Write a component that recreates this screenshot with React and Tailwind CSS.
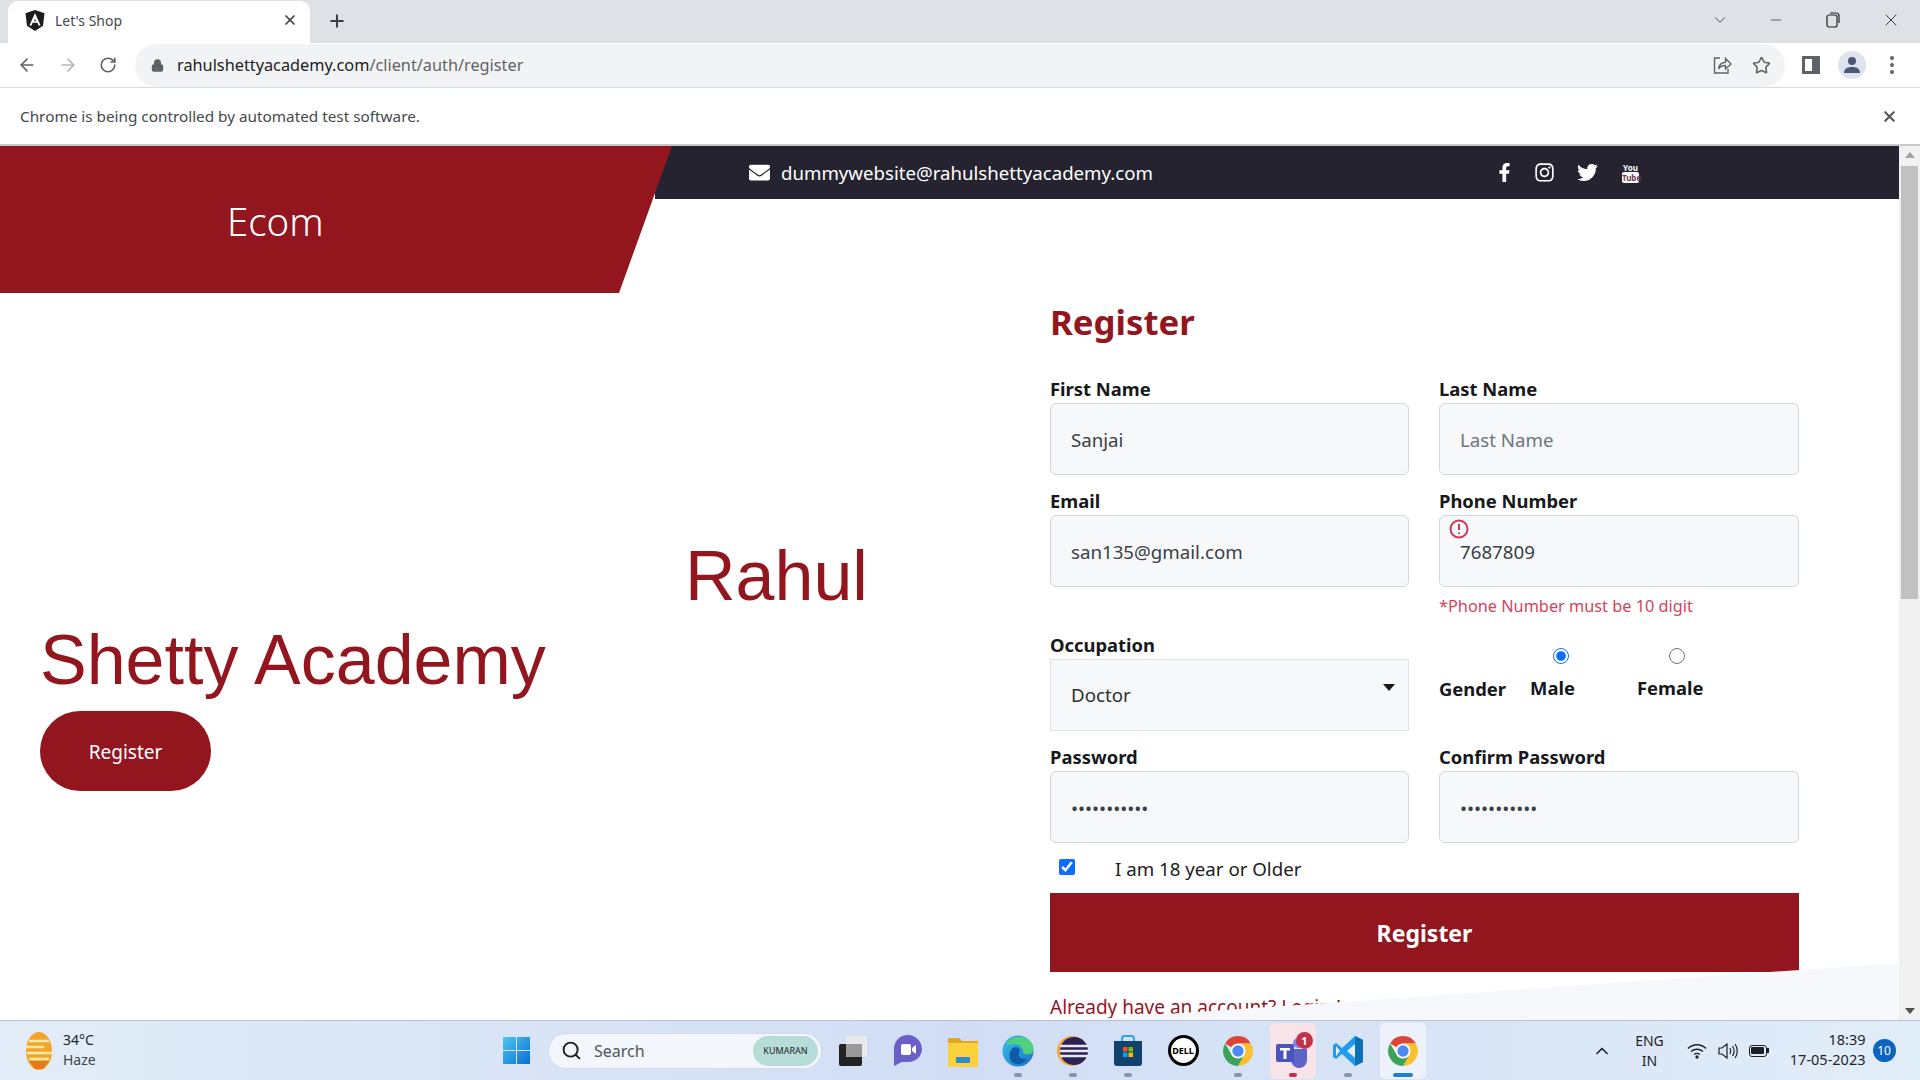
import { ArrowLeft, ArrowRight, RotateCw, Lock, Star, X, Plus, ChevronDown, ChevronUp, Minus, Search } from "lucide-react";
import { FaFacebookF, FaInstagram, FaTwitter, FaEnvelope } from "react-icons/fa";

const inputClass =
  "w-full h-[72px] px-[20px] bg-[#f7f8fa] border border-[#d3d6da] rounded-[6px] text-[18.7px] text-[#3a3f45] outline-none placeholder:text-[#6c757d]";

function Field({ label, children }) {
  return (
    <div>
      <div className="h-[26px] leading-[24px] text-[18.4px] font-bold text-[#16181b]">{label}</div>
      {children}
    </div>
  );
}

function ChromeLogo({ size = 38 }) {
  return (
    <svg width={size} height={size} viewBox="0 0 24 24">
      <path d="M12 1.5a10.5 10.5 0 0 1 9.1 5.25H12a5.25 5.25 0 0 0-4.55 2.63L2.9 6.75A10.5 10.5 0 0 1 12 1.5z" fill="#db4437" />
      <path d="M21.1 6.75A10.5 10.5 0 0 1 12 22.5l4.55-7.88A5.25 5.25 0 0 0 12 6.75z" fill="#fbc02d" />
      <path d="M2.9 6.75A10.5 10.5 0 0 0 12 22.5l4.55-7.88a5.25 5.25 0 0 1-9.1 0z" fill="#3da35a" />
      <circle cx="12" cy="12" r="5.2" fill="#fff" />
      <circle cx="12" cy="12" r="4" fill="#4a8af4" />
    </svg>
  );
}

function TaskIcon({ children, dot, className = "" }) {
  return (
    <div className={`relative w-[46px] h-[56px] mx-[4.5px] flex items-center justify-center rounded-[5px] ${className}`}>
      {children}
      {dot && <span className={`absolute bottom-[2px] left-1/2 -translate-x-1/2 h-[4px] rounded-full ${dot}`} />}
    </div>
  );
}

export default function App() {
  return (
    <div className="w-[1920px] h-[1080px] flex flex-col overflow-hidden bg-white font-['Noto_Sans','Open_Sans',sans-serif]">
      {/* tab strip */}
      <div className="h-[43px] shrink-0 bg-[#dee1e6] flex items-end pl-[8px]">
        <div className="w-[302px] h-[42px] pb-[4px] bg-white rounded-t-[10px] flex items-center pl-[17px] pr-[12px]">
          <svg width="20" height="21" viewBox="0 0 20 21">
            <path d="M10 0L19.5 3.3 18 15.8 10 21 2 15.8.5 3.3z" fill="#1c1c20" />
            <path d="M10 3L4.4 15.6h2.1l1.1-2.8h4.8l1.1 2.8h2.1zM9 11.2l1-2.5 1 2.5z" fill="#fff" />
          </svg>
          <span className="ml-[10px] text-[14px] text-[#45484d]">Let's Shop</span>
          <X size={16} strokeWidth={2.6} className="ml-auto text-[#3c4043]" />
        </div>
        <Plus size={20} strokeWidth={2.4} className="ml-[17px] mb-[12px] text-[#3c4043]" />
        <div className="ml-auto h-full pb-[4px] flex items-center text-[#3c4043]">
          <ChevronDown size={18} strokeWidth={1.2} className="mr-[39px]" />
          <Minus size={16} strokeWidth={1.2} className="mr-[42px]" />
          <svg width="14" height="16" viewBox="0 0 14 16" fill="none" stroke="#222" strokeWidth="1.2" className="mr-[41px]">
            <rect x="1" y="3" width="10" height="12" rx="2" />
            <path d="M4 1h6a3 3 0 0 1 3 3v7" />
          </svg>
          <X size={20} strokeWidth={1.2} className="mr-[19px]" />
        </div>
      </div>

      {/* toolbar */}
      <div className="h-[45px] shrink-0 bg-white border-b border-[#d9dadc] flex items-center">
        <ArrowLeft size={20} strokeWidth={2} className="ml-[17px] text-[#5f6368]" />
        <ArrowRight size={20} strokeWidth={2} className="ml-[21px] text-[#b4b6b9]" />
        <RotateCw size={18} strokeWidth={2.2} className="ml-[21px] text-[#5f6368]" />
        <div className="ml-[18px] w-[1650px] h-[43px] rounded-full bg-[#f1f3f4] flex items-center pl-[16px] pr-[11px]">
          <Lock size={13} strokeWidth={3} fill="#5f6368" className="text-[#5f6368]" />
          <span className="ml-[13px] text-[16.3px] text-[#202124]">
            rahulshettyacademy.com<span className="text-[#5f6368]">/client/auth/register</span>
          </span>
          <svg width="20" height="20" viewBox="0 0 20 20" fill="none" stroke="#5f6368" strokeWidth="1.4" className="ml-auto mr-[20px]">
            <path d="M8 3H2.5v15H16v-4" />
            <path d="M6.5 14c.5-4 3-6.5 7-6.8V3.5L19 9l-5.500 5v-3.500c-3 0-5.500 1-7 3.500z" />
          </svg>
          <Star size={19} strokeWidth={2} className="mr-[3px] text-[#5f6368]" />
        </div>
        <div className="ml-[17px] w-[18px] h-[18px] border-[3px] border-[#5f6368] border-r-[8px]" />
        <div className="ml-[18px] w-[28px] h-[28px] rounded-full bg-[#dfe3ee] flex items-center justify-center">
          <svg width="18" height="18" viewBox="0 0 18 18" fill="#4a5876">
            <circle cx="9" cy="5" r="4" />
            <path d="M1 17c0-4 3-6 8-6s8 2 8 6z" />
          </svg>
        </div>
        <div className="ml-[24px] flex flex-col gap-[3px]">
          <span className="w-[4px] h-[4px] rounded-full bg-[#5f6368]" />
          <span className="w-[4px] h-[4px] rounded-full bg-[#5f6368]" />
          <span className="w-[4px] h-[4px] rounded-full bg-[#5f6368]" />
        </div>
      </div>

      {/* automation infobar */}
      <div className="h-[58px] shrink-0 bg-white border-b-2 border-[#c9cacc] flex items-center justify-between pl-[20px] pr-[22px]">
        <span className="text-[15.3px] text-[#45484c]">Chrome is being controlled by automated test software.</span>
        <X size={17} strokeWidth={3} className="text-[#55585c]" />
      </div>

      {/* page with scrollbar */}
      <div className="h-[874px] shrink-0 flex overflow-hidden">
        <div className="relative w-[1899px] h-full overflow-hidden">
          <div className="flex items-start">
            <div className="relative z-10 w-[672px] h-[147px] bg-[#93161f] [clip-path:polygon(0_0,100%_0,619px_100%,0_100%)] pl-[227px] pt-[45px] text-[38.5px] leading-[60px] font-light text-white">
              Ecom
            </div>
            <div className="w-[1244px] -ml-[17px] h-[53px] bg-[#24232f] flex items-center text-white">
              <FaEnvelope size={21} className="ml-[94px]" />
              <span className="ml-[11px] text-[18.65px]">dummywebsite@rahulshettyacademy.com</span>
              <FaFacebookF size={19} className="ml-[342px]" />
              <FaInstagram size={21} className="ml-[20px]" />
              <FaTwitter size={21} className="ml-[22px]" />
              <div className="ml-[24px] w-[17px] flex flex-col items-center leading-none text-white font-bold">
                <span className="text-[8px] leading-[9px]">You</span>
                <span className="w-full h-[11px] rounded-[2px] bg-white text-[8px] leading-[11px] text-center text-[#6b3a55]">Tube</span>
              </div>
            </div>
          </div>

          <div className="flex">
            <div className="w-[1050px] shrink-0 pl-[40px] pt-[241px] text-[#93161f] font-['Liberation_Sans',sans-serif] text-[70px]">
              <div className="ml-[645px] h-[84px] leading-[84px]">Rahul</div>
              <div className="h-[72px] leading-[84px]">Shetty Academy</div>
              <button className="block mt-[21px] pt-[3px] w-[171px] h-[80px] rounded-full bg-[#93161f] text-white text-[19px] font-['Noto_Sans',sans-serif]">
                Register
              </button>
            </div>

            <div className="w-[749px] shrink-0">
              <h1 className="mt-[3px] h-[52px] leading-[52px] text-[34.8px] font-bold text-[#93161f]">Register</h1>
              <div className="mt-[29px] grid grid-cols-[359px_360px] gap-x-[30px] gap-y-[14px]">
                <Field label="First Name">
                  <input className={inputClass} defaultValue="Sanjai" />
                </Field>
                <Field label="Last Name">
                  <input className={inputClass} placeholder="Last Name" />
                </Field>
                <Field label="Email">
                  <input className={inputClass} defaultValue="san135@gmail.com" />
                </Field>
                <Field label="Phone Number">
                  <div className="relative">
                    <input className={inputClass} defaultValue="7687809" />
                    <svg width="20" height="20" viewBox="0 0 20 20" fill="none" className="absolute left-[10px] top-[4px]">
                      <circle cx="10" cy="10" r="8.500" stroke="#cc3a55" strokeWidth="2" />
                      <path d="M10 5v6M10 13.500v1.500" stroke="#cc3a55" strokeWidth="2" />
                    </svg>
                  </div>
                  <div className="mt-[6px] h-[26px] leading-[26px] text-[16.3px] text-[#d2445c]">*Phone Number must be 10 digit</div>
                </Field>
                <Field label="Occupation">
                  <div className="w-full h-[72px] pl-[20px] pr-[13px] bg-[#f7f8fa] border border-[#dfe1e4] flex items-center justify-between text-[18.7px] text-[#2b2f33]">
                    <span>Doctor</span>
                    <span className="mb-[16px] w-0 h-0 border-x-[6px] border-x-transparent border-t-[7px] border-t-[#1a1a1a]" />
                  </div>
                </Field>
                <div className="flex items-start text-[18.4px] font-bold text-[#16181b] pt-[15px]">
                  <span className="mt-[27px]">Gender</span>
                  <div className="ml-[24px] flex flex-col items-center">
                    <input type="radio" name="gender" defaultChecked className="ml-[18px] w-[16px] h-[16px] accent-[#0d6efd]" />
                    <span className="mt-[10px]">Male</span>
                  </div>
                  <div className="ml-[62px] flex flex-col items-center">
                    <input type="radio" name="gender" className="ml-[14px] w-[16px] h-[16px]" />
                    <span className="mt-[10px]">Female</span>
                  </div>
                </div>
                <Field label="Password">
                  <input type="password" className={inputClass} defaultValue="abcdefghijk" />
                </Field>
                <Field label="Confirm Password">
                  <input type="password" className={inputClass} defaultValue="abcdefghijk" />
                </Field>
              </div>
              <div className="h-[50px] pt-[2px] flex items-center pl-[9px] text-[18.7px] text-[#1d2024]">
                <input type="checkbox" defaultChecked className="w-[16px] h-[16px] mb-[4px] accent-[#0d6efd]" />
                <span className="ml-[40px]">I am 18 year or Older</span>
              </div>
              <button className="block w-full h-[79px] pt-[2px] bg-[#93161f] text-white text-[23px] font-bold">Register</button>
              <div className="mt-[21px] text-[19px] text-[#93161f]">Already have an account? Login !</div>
            </div>
          </div>

          {/* slanted footer wave over the bottom of the page */}
          <div className="absolute left-0 bottom-0 w-full h-[57px] bg-[#f6f8fb] [clip-path:polygon(1899px_0,1899px_100%,1082px_100%)]" />
        </div>

        {/* scrollbar */}
        <div className="w-[21px] h-full bg-[#f1f1f1] flex flex-col items-center">
          <span className="mt-[6px] w-0 h-0 border-x-[5px] border-x-transparent border-b-[6px] border-b-[#a3a3a3]" />
          <div className="mt-[8px] w-[17px] h-[433px] bg-[#c1c1c1]" />
          <span className="mt-auto mb-[6px] w-0 h-0 border-x-[5px] border-x-transparent border-t-[6px] border-t-[#505050]" />
        </div>
      </div>

      {/* taskbar */}
      <div className="h-[60px] shrink-0 border-t border-[#b9c3d3] bg-gradient-to-r from-[#e2edf8] via-[#d1ddf4] to-[#e1edf8] flex items-center font-['Noto_Sans',sans-serif]">
        <svg width="30" height="40" viewBox="0 0 30 40" className="ml-[24px]">
          <ellipse cx="15" cy="20" rx="13" ry="19" fill="#f2a52c" />
          <path d="M5 10h20M2 16h18M3 22h26M5 28h20" stroke="#fde9a8" strokeWidth="2.500" />
          <path d="M5 30h20l-6 8h-8z" fill="#e4791f" />
        </svg>
        <div className="ml-[9px] mb-[2px] w-[36px] text-[14px] leading-[20px] text-[#1f2429]">
          <div>34°C</div>
          <div className="text-[#40464c]">Haze</div>
        </div>
        <svg width="29" height="29" viewBox="0 0 29 29" className="ml-[403px]">
          <defs>
            <linearGradient id="winGrad" x1="0" y1="0" x2="1" y2="1">
              <stop offset="0" stopColor="#4fc6f4" />
              <stop offset="1" stopColor="#0b6ed0" />
            </linearGradient>
          </defs>
          <path d="M1 1h13v13H1zM15 1h13v13H15zM1 15h13v13H1zM15 15h13v13H15z" fill="url(#winGrad)" />
        </svg>
        <div className="ml-[17px] w-[274px] h-[36px] rounded-full bg-[#f3f6fb] border border-[#d5dce8] flex items-center pl-[12px] pr-[3px]">
          <Search size={21} strokeWidth={2.2} className="text-[#1d2024]" />
          <span className="ml-[12px] text-[16px] text-[#50555b]">Search</span>
          <span className="ml-auto w-[65px] h-[30px] rounded-full bg-[#b6dcd8] text-[9px] leading-[30px] text-center text-[#222] overflow-hidden">KUMARAN</span>
        </div>

        <div className="ml-[3.500px] flex items-center">
          <TaskIcon>
            <svg width="30" height="32" viewBox="0 0 30 32">
              <rect x="1" y="9" width="23" height="22" rx="2" fill="#222" />
              <rect x="8" y="1" width="21" height="21" rx="2" fill="#e7e9ec" />
              <rect x="8" y="9" width="16" height="13" fill="#9a9a9a" />
            </svg>
          </TaskIcon>
          <TaskIcon>
            <svg width="30" height="34" viewBox="0 0 30 34">
              <path d="M15 1C7 1 1 7 1 15v17l8-4h6c8 0 14-6 14-13S23 1 15 1z" fill="#6a5fc8" />
              <rect x="8" y="10" width="10" height="11" rx="2" fill="#fff" />
              <path d="M19 14l4-3v9l-4-3z" fill="#fff" />
            </svg>
          </TaskIcon>
          <TaskIcon>
            <svg width="32" height="32" viewBox="0 0 32 32">
              <path d="M1 3h11l3 3h16v24H1z" fill="#e3a823" />
              <rect x="1" y="8" width="30" height="24" fill="#fbd13e" />
              <rect x="9" y="22" width="14" height="6" rx="1" fill="#2f8ad0" />
            </svg>
          </TaskIcon>
          <TaskIcon dot="w-[8px] bg-[#8a93a2]">
            <svg width="32" height="34" viewBox="0 0 32 34">
              <defs>
                <linearGradient id="edgeGrad" x1="0" y1="0" x2="1" y2="1">
                  <stop offset="0" stopColor="#35c1f1" />
                  <stop offset="1" stopColor="#1b6fc4" />
                </linearGradient>
              </defs>
              <circle cx="16" cy="17" r="15.500" fill="url(#edgeGrad)" />
              <path d="M4 11C8 2 22 0 29 8c3 4 3 9 1 11-3 2-9 2-9-1 0-5-4-8-8-8-4 0-7 1-9 1z" fill="#52d17c" />
              <path d="M13 13c4 0 6 3 4 6-2 4 3 7 8 6-4 6-12 7-16 2-3-5-1-13 4-14z" fill="#0f5aa8" />
            </svg>
          </TaskIcon>
          <TaskIcon dot="w-[8px] bg-[#8a93a2]">
            <svg width="32" height="32" viewBox="0 0 32 32">
              <circle cx="15" cy="16" r="15" fill="#f4a63a" />
              <circle cx="17" cy="16" r="14" fill="#2c2255" />
              <path d="M3 11h28M3 16h28M3 21h28" stroke="#e8e8f2" strokeWidth="2.500" />
            </svg>
          </TaskIcon>
          <TaskIcon dot="w-[8px] bg-[#8a93a2]">
            <svg width="30" height="32" viewBox="0 0 30 32">
              <path d="M9 7V4a3 3 0 0 1 3-3h6a3 3 0 0 1 3 3v3" fill="none" stroke="#2aa5e8" strokeWidth="2" />
              <path d="M1 6h28v22a3 3 0 0 1-3 3H4a3 3 0 0 1-3-3z" fill="#12426e" />
              <rect x="10" y="12" width="4.500" height="4.500" fill="#f25022" />
              <rect x="15.500" y="12" width="4.500" height="4.500" fill="#7fba00" />
              <rect x="10" y="17.500" width="4.500" height="4.500" fill="#00a4ef" />
              <rect x="15.500" y="17.500" width="4.500" height="4.500" fill="#ffb900" />
            </svg>
          </TaskIcon>
          <TaskIcon>
            <div className="w-[31px] h-[31px] rounded-full border-[3px] border-black bg-white flex items-center justify-center text-[9px] font-bold text-black">DELL</div>
          </TaskIcon>
          <TaskIcon dot="w-[8px] bg-[#8a93a2]">
            <ChromeLogo size={34} />
          </TaskIcon>
          <TaskIcon dot="w-[8px] bg-[#c4314b]" className="bg-[#f7e3e8]">
            <div className="relative w-[38px] h-[36px]">
              <svg width="38" height="36" viewBox="0 0 38 36">
                <circle cx="24" cy="10" r="5" fill="#7b83eb" />
                <path d="M14 16h19v10a8 8 0 0 1-16 2z" fill="#5d64c8" />
                <rect x="2" y="11" width="18" height="18" rx="2" fill="#4b53bc" />
                <path d="M6 15h10v2.500h-3.500V26h-3v-8.500H6z" fill="#fff" />
              </svg>
              <span className="absolute -top-[1px] -right-[1px] w-[17px] h-[17px] rounded-full bg-[#c4314b] text-white text-[11px] leading-[17px] text-center font-bold">1</span>
            </div>
          </TaskIcon>
          <TaskIcon dot="w-[8px] bg-[#8a93a2]">
            <svg width="32" height="32" viewBox="0 0 32 32">
              <path d="M23 1l8 4v22l-8 4-13-12-6 5-3-2v-12l3-2 6 5z" fill="#1f9cf0" />
              <path d="M23 9l-8 7 8 7z" fill="#e4edf8" />
              <path d="M4 11l4 5-4 5z" fill="#e4edf8" />
              <path d="M23 1l8 4v22l-8 4z" fill="#0a70b8" />
            </svg>
          </TaskIcon>
          <TaskIcon dot="w-[20px] bg-[#1d7fd3]" className="bg-[#edf2fa]">
            <ChromeLogo size={34} />
          </TaskIcon>
        </div>

        <ChevronUp size={20} strokeWidth={2} className="ml-[161px] text-[#1d2024]" />
        <div className="ml-[17px] w-[42px] text-center text-[14px] leading-[20px] text-[#1f2429]">
          <div>ENG</div>
          <div>IN</div>
        </div>
        <svg width="20" height="16" viewBox="0 0 20 16" fill="none" stroke="#1d2024" strokeWidth="1.300" className="ml-[16px]">
          <path d="M1 5.500c5-5 13-5 18 0M4 8.500c3.500-3 8.500-3 12 0M7 11.500c2-1.500 4-1.500 6 0" />
          <circle cx="10" cy="14" r="1" fill="#1d2024" />
        </svg>
        <svg width="20" height="18" viewBox="0 0 20 18" fill="none" stroke="#1d2024" strokeWidth="1.200" className="ml-[11px]">
          <path d="M1 6h3l5-4v14l-5-4H1zM12 6c1 2 1 4 0 6M14.500 4c2 3 2 7 0 10M17 2c3 4 3 10 0 14" />
        </svg>
        <div className="ml-[11px] flex items-center">
          <div className="w-[18px] h-[12px] rounded-[3px] border border-[#1d2024] p-[1.500px]">
            <div className="w-full h-full bg-[#1d2024] rounded-[1px]" />
          </div>
          <span className="w-[2px] h-[5px] bg-[#1d2024]" />
        </div>
        <div className="ml-[11px] mb-[3px] w-[86px] text-right text-[14.5px] leading-[20px] text-[#1f2429]">
          <div>18:39</div>
          <div className="whitespace-nowrap">17-05-2023</div>
        </div>
        <span className="ml-[7px] w-[23px] h-[23px] rounded-full bg-[#0c63c0] text-white text-[12px] leading-[23px] text-center">10</span>
      </div>
    </div>
  );
}
